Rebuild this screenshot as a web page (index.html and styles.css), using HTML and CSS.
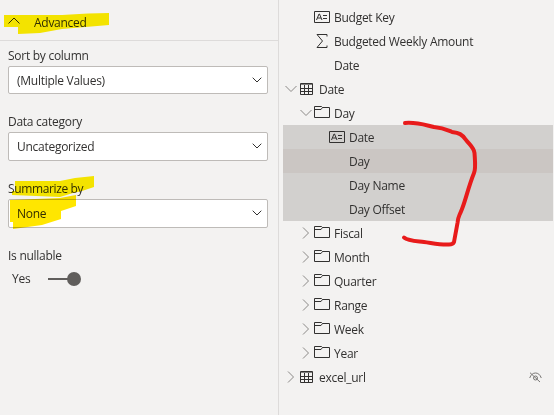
FILE: index.html
```html
<!DOCTYPE html>
<html lang="en">
<head>
<meta charset="utf-8">
<title>Model properties</title>
<link rel="stylesheet" href="styles.css">
</head>
<body>
<svg class="defs" width="0" height="0" aria-hidden="true">
  <symbol id="down" viewBox="0 0 12 8"><path d="M.5 1 6 6.500 11.500 1"/></symbol>
  <symbol id="right" viewBox="0 0 8 12"><path d="M1 .5 6.500 6 1 11.500"/></symbol>
  <symbol id="folder" viewBox="0 0 16 12"><path d="M.5 11.500V.5h7l1 1h7v10zM.5 3.500h6.500l1.500-2"/></symbol>
  <symbol id="table" viewBox="0 0 13 13"><path d="M.5.5h12v11H.5zM.5 5.500h12M.5 8.500h12M4.500 2v9.500M8.500 2v9.500"/><path d="M.5 1.500h12" stroke-opacity=".6"/></symbol>
  <symbol id="card" viewBox="0 0 16 12"><path d="M.5.5h15v11H.5zM9 4.500h4M9 7.500h4M2.500 9 5 3h.5L8 9M3.500 7h3.500"/></symbol>
  <symbol id="sum" viewBox="0 0 12 14"><path d="M11 2.500V.5H1l5.500 6.500L1 13.500h10v-2"/></symbol>
</svg>
<div class="app">
  <section class="props">
    <header class="head">
      <svg class="up" width="12" height="7" viewBox="0 0 12 7"><path d="M.5 6.500 6 1l5.500 5.500"/></svg>
      <span>Advanced</span>
    </header>
    <div class="form">
      <div class="label">Sort by column</div>
      <div class="select first"><span>(Multiple Values)</span><svg width="10" height="6" viewBox="0 0 10 6"><path d="m.7.700 4.300 4.300L9.300.700"/></svg></div>
      <div class="label">Data category</div>
      <div class="select"><span>Uncategorized</span><svg width="10" height="6" viewBox="0 0 10 6"><path d="m.7.700 4.300 4.300L9.300.700"/></svg></div>
      <div class="label tight">Summarize by</div>
      <div class="select"><span>None</span><svg width="10" height="6" viewBox="0 0 10 6"><path d="m.7.700 4.300 4.300L9.300.700"/></svg></div>
      <div class="label">Is nullable</div>
      <div class="toggle"><span>Yes</span><span class="track"></span><span class="knob"></span></div>
    </div>
  </section>
  <section class="tree">
    <div class="row l2"><svg class="ico" width="16" height="12"><use href="#card"/></svg><span>Budget Key</span></div>
    <div class="row l2"><svg class="sigma" width="12" height="14"><use href="#sum"/></svg><span>Budgeted Weekly Amount</span></div>
    <div class="row l2 bare"><span>Date</span></div>
    <div class="row l0"><svg class="chev" width="12" height="8"><use href="#down"/></svg><svg class="tab" width="13" height="13"><use href="#table"/></svg><span>Date</span></div>
    <div class="row l1"><svg class="chev" width="12" height="8"><use href="#down"/></svg><svg class="ico" width="16" height="12"><use href="#folder"/></svg><span>Day</span></div>
    <div class="row l3 sel"><svg class="ico" width="16" height="12"><use href="#card"/></svg><span>Date</span></div>
    <div class="row l3 sel bare hot"><span>Day</span></div>
    <div class="row l3 sel bare"><span>Day Name</span></div>
    <div class="row l3 sel bare"><span>Day Offset</span></div>
    <div class="row l1"><svg class="chev r" width="8" height="12"><use href="#right"/></svg><svg class="ico" width="16" height="12"><use href="#folder"/></svg><span>Fiscal</span></div>
    <div class="row l1"><svg class="chev r" width="8" height="12"><use href="#right"/></svg><svg class="ico" width="16" height="12"><use href="#folder"/></svg><span>Month</span></div>
    <div class="row l1"><svg class="chev r" width="8" height="12"><use href="#right"/></svg><svg class="ico" width="16" height="12"><use href="#folder"/></svg><span>Quarter</span></div>
    <div class="row l1"><svg class="chev r" width="8" height="12"><use href="#right"/></svg><svg class="ico" width="16" height="12"><use href="#folder"/></svg><span>Range</span></div>
    <div class="row l1"><svg class="chev r" width="8" height="12"><use href="#right"/></svg><svg class="ico" width="16" height="12"><use href="#folder"/></svg><span>Week</span></div>
    <div class="row l1"><svg class="chev r" width="8" height="12"><use href="#right"/></svg><svg class="ico" width="16" height="12"><use href="#folder"/></svg><span>Year</span></div>
    <div class="row l0"><svg class="chev r" width="8" height="12"><use href="#right"/></svg><svg class="tab" width="13" height="13"><use href="#table"/></svg><span>excel_url</span>
      <svg class="eye" width="13" height="11" viewBox="0 0 13 11"><path d="M.7 6C2 2.500 4 1 6.500 1S11 2.500 12.300 6M1 .7l10 9.300"/><circle cx="6.500" cy="6" r="2"/></svg></div>
  </section>
</div>
<svg class="marks yellow" width="554" height="415" aria-hidden="true">
  <path d="M4 15H62L88 13.500 109 13V25L62 29 40 33 18 34V27H4Z"/>
  <path d="M15 181H60L75 178 94 176V187L82 191 73 193 60 197 12 195V191H15Z"/>
  <path class="deep" d="M10 200 60 198 76 195V206L61 211V219L42 225 13 229V222H10Z"/>
</svg>
<svg class="marks red" width="554" height="415" aria-hidden="true">
  <path d="M405 123C417 122 425 125 434 127 444 128 447 130 452 132 459 133 462 134 466 140 471 146 474 148 474.500 153 475 161 476 169 474 173 468 188 466 199 462 209 459 217 458 216 457.500 223L454 242Q453 244.500 449 244.500C440 245 432 243 424 242 415 241 408 241 404 237.500"/>
</svg>
</body>
</html>
```
FILE: styles.css
```css
* { box-sizing: border-box; }
body {
  margin: 0;
  width: 554px;
  height: 415px;
  overflow: hidden;
  background: #f3f2f1;
  color: #323130;
  font: 12px/16px "Open Sans", "Noto Sans", sans-serif;
  letter-spacing: -.27px;
}
span, .label { white-space: nowrap; }
.defs { position: absolute; }
svg { flex: none; fill: none; stroke: #323130; stroke-width: 1; }
.app { display: flex; height: 415px; }
.props { width: 279px; border-right: 1px solid #dddbda; }
.head {
  display: flex;
  align-items: center;
  height: 41px;
  padding: 5px 0 0 8px;
  border-bottom: 1px solid #dddbda;
}
.up { margin: -5px 14px 0 0; }
.form { padding: 7px 10px 0 8px; }
.label { height: 16px; }
.label.tight { letter-spacing: -.37px; }
.select {
  display: flex;
  align-items: center;
  justify-content: space-between;
  height: 29px;
  margin: 2px 0 20px;
  padding: 0 5px 0 8px;
  background: #fff;
  border: 1px solid #bebbb8;
  border-radius: 2px;
}
.select.first { padding-top: 1px; height: 28px; }
.select svg { margin-top: -1px; }
.toggle { display: flex; align-items: center; height: 16px; margin: 7px 0 0 4px; }
.toggle span:first-child { width: 36px; }
.track { width: 20px; height: 2px; background: #605e5c; }
.knob { width: 14px; height: 14px; margin-left: -1px; border-radius: 50%; background: #605e5c; }
.tree { flex: 1; padding: 5px 1px 0 4px; }
.row { display: flex; align-items: center; height: 24px; }
.row > span { margin: 2px 0 0 4px; }
.l0 { padding-left: 2px; }
.l1 { padding-left: 17px; }
.l2 { padding-left: 31px; }
.l3 { padding-left: 46px; }
.bare > span { margin-left: 20px; }
.chev { width: 12px; margin-right: 2px; stroke: #8a8886; }
.chev.r { width: 8px; margin: 0 4px 0 2px; }
.l0 .chev { margin-right: 3px; }
.l0 .chev.r { margin-right: 5px; }
.l1 .ico { margin-top: -2px; }
.row .tab + span { margin-left: 6px; }
.sigma { margin: 0 2px; }
.sel { background: #d2d0ce; }
.hot { background: #cbc6c3; }
.eye { margin: 0 11px 0 auto; stroke: #797775; }
.marks { position: absolute; left: 0; top: 0; pointer-events: none; }
.yellow { mix-blend-mode: multiply; }
.yellow path { fill: #fff000; stroke: none; }
.yellow .deep { fill: #ffe600; }
.red path { stroke: #e81b1b; stroke-width: 4; stroke-linecap: round; stroke-linejoin: round; }
```
